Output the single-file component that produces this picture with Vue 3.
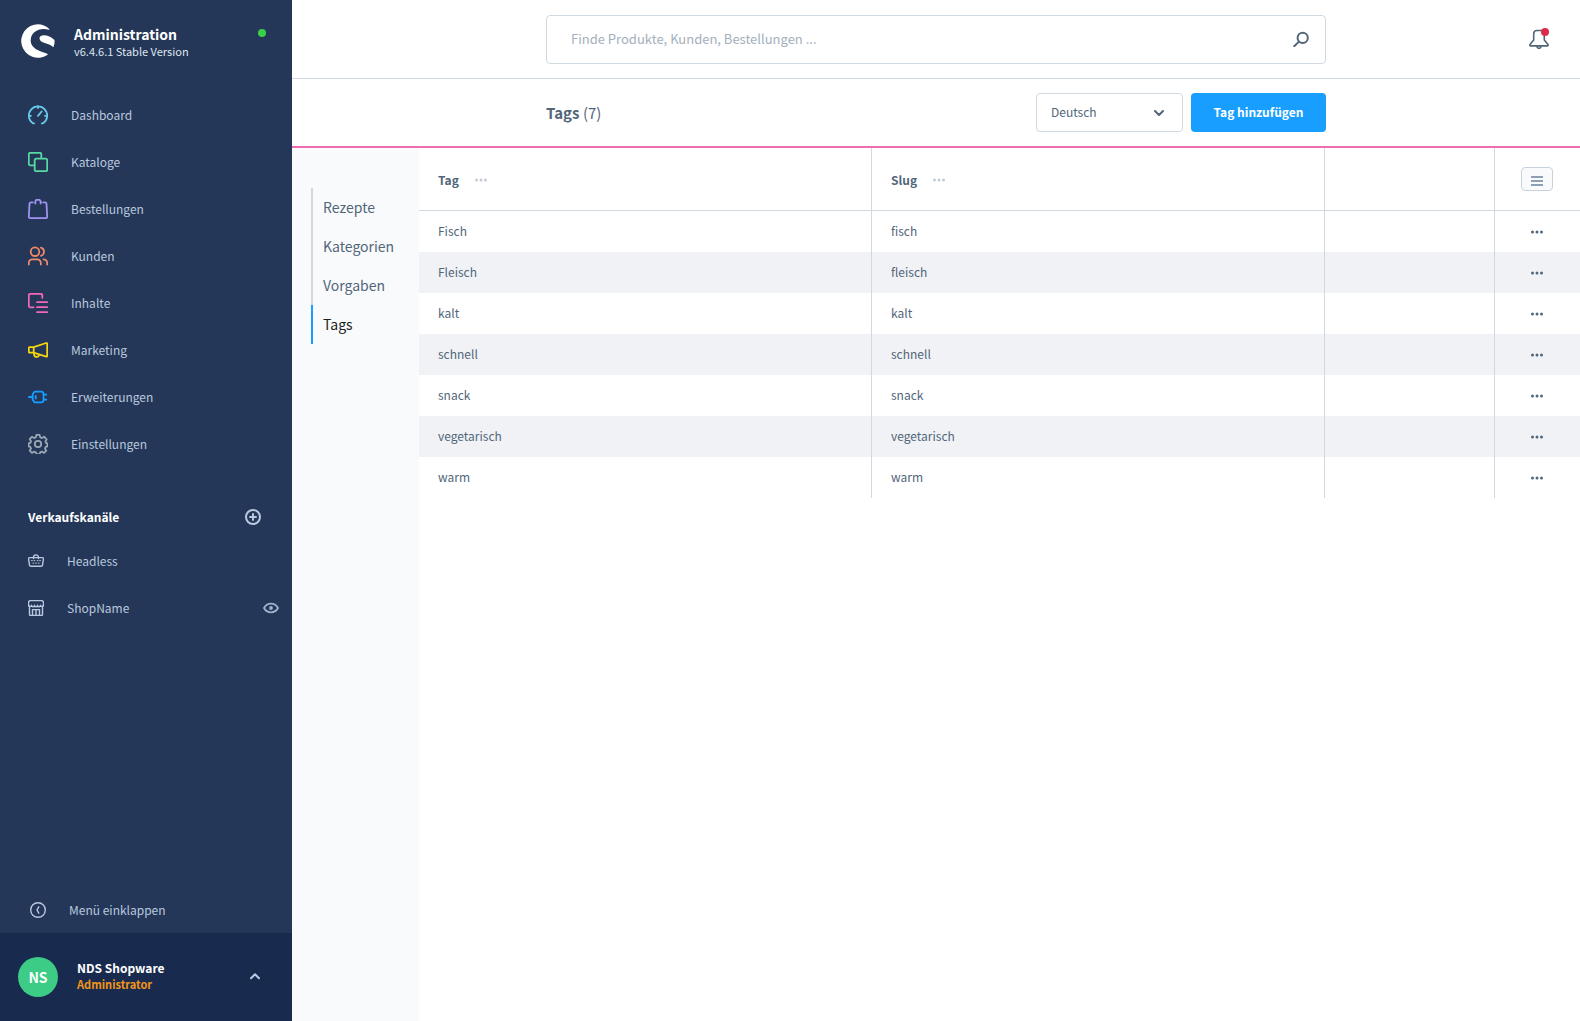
<script setup>
import { ref } from 'vue'

const navItems = [
  { label: 'Dashboard', icon: 'dashboard', color: '#69c8e8' },
  { label: 'Kataloge', icon: 'catalog', color: '#57d9a3' },
  { label: 'Bestellungen', icon: 'orders', color: '#a092f0' },
  { label: 'Kunden', icon: 'customers', color: '#f08a68' },
  { label: 'Inhalte', icon: 'content', color: '#f068b8' },
  { label: 'Marketing', icon: 'marketing', color: '#f5d60f' },
  { label: 'Erweiterungen', icon: 'extensions', color: '#189eff' },
  { label: 'Einstellungen', icon: 'settings', color: '#9aa8b5' },
]

const channels = [
  { label: 'Headless', icon: 'basket', visible: false },
  { label: 'ShopName', icon: 'store', visible: true },
]

const tabs = ['Rezepte', 'Kategorien', 'Vorgaben', 'Tags']
const activeTab = ref('Tags')

const tags = ['Fisch', 'Fleisch', 'kalt', 'schnell', 'snack', 'vegetarisch', 'warm'].map((name) => ({
  name,
  slug: name.toLowerCase(),
}))

const language = ref('Deutsch')
const query = ref('')
</script>

<template>
  <div class="app">
    <aside class="sidebar">
      <header class="brand">
        <svg class="logo" viewBox="0 0 34 34" aria-hidden="true">
          <path
            fill="#fff"
            d="M28 4.800C25 1.800 21 0.200 17 0.200A16.800 16.800 0 1 0 26.300 31c.6-.4.500-1-.2-1.300C21 27.500 9.700 25.500 9.700 16.500 9.700 9 16 5.200 22.500 5c2 0 3.800.3 5.300.8.700.2.800-.4.200-1z"
          />
          <path
            fill="#fff"
            d="M33.500 16c-2.700-2.800-6-4.500-9.800-4.800-3-.2-5.200 1-5.200 3.100 0 5.300 9.700 4.800 13.200 8.500.4.400.8.300 1-.2.700-2 1-4.200.8-6.600z"
          />
        </svg>
        <div class="brand-text">
          <strong>Administration</strong>
          <span>v6.4.6.1 Stable Version</span>
        </div>
        <span class="status"></span>
      </header>

      <nav class="main-nav">
        <a v-for="item in navItems" :key="item.label" href="#" class="nav-item">
          <svg class="nav-icon" viewBox="0 0 20 20" :style="{ color: item.color }" aria-hidden="true">
            <template v-if="item.icon === 'dashboard'">
              <path d="M6.200 18.300H4.900A9.200 9.200 0 1 1 15.100 18.300H13.800M10 1v2M1 10.800h2M17 10.800h2M10 10.800l3.600-4.300" />
            </template>
            <template v-else-if="item.icon === 'catalog'">
              <path d="M5.700 13.300H2.300A1.500 1.500 0 0 1 .8 11.800V2.300A1.500 1.500 0 0 1 2.300.8h9.500a1.500 1.500 0 0 1 1.500 1.500v3.400" />
              <rect x="6.700" y="6.700" width="12.500" height="12.500" rx="1.500" />
            </template>
            <template v-else-if="item.icon === 'orders'">
              <path d="M4.800 3.400H3A1.500 1.500 0 0 0 1.500 4.900L.8 17.600a1.500 1.500 0 0 0 1.500 1.600h15.400a1.500 1.500 0 0 0 1.500-1.600L18.500 4.900A1.500 1.500 0 0 0 17 3.400h-1.800M7.400 4.600V2.600A1.800 1.800 0 0 1 9.200.8h1.600a1.800 1.800 0 0 1 1.800 1.800v2M7.400 3.400H7M12.600 3.400h.5" />
            </template>
            <template v-else-if="item.icon === 'customers'">
              <circle cx="7" cy="5.700" r="4.300" />
              <path d="M.8 18.500v-1.700a3.500 3.500 0 0 1 3.500-3.500h5a3.500 3.500 0 0 1 3.500 3.500v1.700M13 1.600a4.300 4.300 0 0 1 0 8.200M15.500 13.400a3.700 3.700 0 0 1 3.700 3.600v1.500" />
            </template>
            <template v-else-if="item.icon === 'content'">
              <path d="M5.700 14.300H2.300A1.500 1.500 0 0 1 .8 12.800V2.300A1.500 1.500 0 0 1 2.300.8h10.500a1.500 1.500 0 0 1 1.500 1.500v2.500M9 9.200h10.300M9 14.200h10.300M9 19.200h10.300" />
            </template>
            <template v-else-if="item.icon === 'marketing'">
              <path d="M1.700 7.200h4L18.200 3a.8.8 0 0 1 1 .7v12.200a.8.8 0 0 1-1 .7L5.700 12.700h-4a.9.9 0 0 1-.9-.9V8.100a.9.9 0 0 1 .9-.9zM5.700 7.200v5.500M6 13.200v1.200a2.600 2.600 0 0 0 4.800 1.300" />
            </template>
            <template v-else-if="item.icon === 'extensions'">
              <path d="M.9 10h3.800M15.500 7.600h2.800M15.500 12.700h2.800M6.700 4.700h6.600a2 2 0 0 1 2.200 2v6.600a2 2 0 0 1-2.200 2H6.700L4.700 13V7zM7.700 9v2.400" />
            </template>
            <template v-else>
              <circle cx="10" cy="10" r="3.200" />
              <path d="M8.400.9h3.200l.6 2.400 1.700.7L16 2.700 17.400 4l1.300 1.500-1.300 2 .6 1.400 1.300.4v3l-1.600.5-.7 1.700 1.300 2.200-2.200 2.200-2.200-1.300-1.700.7-.6 1.900H8.400l-.6-1.900-1.700-.7-2.200 1.300-2.200-2.200L3 14.500l-.7-1.700-1.600-.5v-3L2.300 8.800 3 7.300 1.700 5.100 3.900 2.800 6.100 4l1.700-.7z" />
            </template>
          </svg>
          <span>{{ item.label }}</span>
        </a>
      </nav>

      <section class="channels">
        <div class="channels-head">
          <h2>Verkaufskanäle</h2>
          <button type="button" class="plain" aria-label="Verkaufskanal hinzufügen">
            <svg width="16" height="16" viewBox="0 0 16 16" aria-hidden="true">
              <circle cx="8" cy="8" r="7" />
              <path d="M8 5v6M5 8h6" />
            </svg>
          </button>
        </div>
        <a v-for="channel in channels" :key="channel.label" href="#" class="channel">
          <svg v-if="channel.icon === 'basket'" class="channel-icon" viewBox="0 0 16 16" aria-hidden="true">
            <path d="M5 4.600H1.500a1 1 0 0 0-1 1.200l1 6.300a1.400 1.400 0 0 0 1.400 1.200h10.200a1.400 1.400 0 0 0 1.400-1.200l1-6.300a1 1 0 0 0-1-1.200H11M5.500 5.600V4.400a2.500 2.500 0 0 1 5 0v1.200M5.500 4.600h5" />
            <path class="dots" d="M3.500 7.600h.8M6 7.600h.8M9.200 7.600h.8M11.700 7.600h.8M5 10.100h.8M7.600 10.100h.8M10.300 10.100h.8" />
          </svg>
          <svg v-else class="channel-icon" viewBox="0 0 16 16" aria-hidden="true">
            <path d="M1.500 6v8.600a.8.800 0 0 0 .8.800h11.400a.8.800 0 0 0 .8-.8V6M2.500.600h11a2 2 0 0 1 2 2V5a1.500 1.500 0 0 1-3 .2 1.500 1.500 0 0 1-3 0 1.500 1.500 0 0 1-3 0 1.500 1.500 0 0 1-3 0A1.500 1.500 0 0 1 .5 5V2.600a2 2 0 0 1 2-2zM4.500 15.400V9.600h7v5.800M8 9.600v5.800" />
          </svg>
          <span>{{ channel.label }}</span>
          <svg v-if="channel.visible" class="eye" viewBox="0 0 16 16" aria-hidden="true">
            <path d="M1 8c1.600-3 4.200-4.300 7-4.300S13.400 5 15 8c-1.600 3-4.200 4.300-7 4.300S2.600 11 1 8z" />
            <circle cx="8" cy="8" r="1" fill="currentColor" />
          </svg>
        </a>
      </section>

      <button type="button" class="collapse">
        <svg width="16" height="16" viewBox="0 0 16 16" aria-hidden="true">
          <circle cx="8" cy="8" r="7.300" />
          <path d="M8.800 4.800 7 8l1.800 3.200" />
        </svg>
        <span>Menü einklappen</span>
      </button>

      <button type="button" class="user">
        <span class="avatar">NS</span>
        <span class="user-text">
          <strong>NDS Shopware</strong>
          <span class="role">Administrator</span>
        </span>
        <svg class="user-chevron" width="12" height="12" viewBox="0 0 12 12" aria-hidden="true">
          <path d="M2 7.300 6 3.300l4 4" />
        </svg>
      </button>
    </aside>

    <main class="page">
      <div class="topbar">
        <label class="search">
          <input v-model="query" type="text" placeholder="Finde Produkte, Kunden, Bestellungen ..." aria-label="Suche" />
          <svg width="16" height="16" viewBox="0 0 16 16" aria-hidden="true">
            <circle cx="9.700" cy="6.900" r="5.100" />
            <path d="M6 10.600 1.200 15.200" />
          </svg>
        </label>
        <button type="button" class="bell" aria-label="Benachrichtigungen">
          <svg width="20" height="20" viewBox="0 0 20 20" aria-hidden="true">
            <path d="M8 1.500h4a3.300 3.300 0 0 1 3.300 3.200v6.200l3.500 4.400a.9.900 0 0 1-.7 1.600H1.900a.9.900 0 0 1-.7-1.600l3.500-4.400V4.700A3.300 3.300 0 0 1 8 1.500zM8 17.300a2 2 0 0 0 4 0" />
          </svg>
          <span class="bell-dot"></span>
        </button>
      </div>

      <div class="smartbar">
        <div class="smartbar-inner">
          <h1>Tags <span>(7)</span></h1>
          <div class="language">
            <select v-model="language" aria-label="Sprache">
              <option>Deutsch</option>
              <option>English</option>
            </select>
            <svg width="12" height="12" viewBox="0 0 12 12" aria-hidden="true">
              <path d="M2 4l4 4 4-4" />
            </svg>
          </div>
          <button type="button" class="primary">Tag hinzufügen</button>
        </div>
      </div>

      <div class="content">
        <nav class="side-tabs">
          <a
            v-for="tab in tabs"
            :key="tab"
            href="#"
            :class="{ active: tab === activeTab }"
            @click.prevent="activeTab = tab"
          >{{ tab }}</a>
        </nav>

        <div class="grid-wrap">
          <table>
            <colgroup>
              <col />
              <col />
              <col class="col-extra" />
              <col class="col-actions" />
            </colgroup>
            <thead>
              <tr>
                <th v-for="title in ['Tag', 'Slug']" :key="title" scope="col">
                  <div class="head-cell">
                    <span>{{ title }}</span>
                    <svg class="more light" width="12" height="4" viewBox="0 0 12 4" aria-hidden="true">
                      <circle cx="1.500" cy="2" r="1.500" /><circle cx="6" cy="2" r="1.500" /><circle cx="10.500" cy="2" r="1.500" />
                    </svg>
                  </div>
                </th>
                <th></th>
                <th class="actions">
                  <button type="button" class="settings" aria-label="Spalten">
                    <svg width="12" height="12" viewBox="0 0 12 12" aria-hidden="true">
                      <path d="M0 2h12M0 6h12M0 10h12" />
                    </svg>
                  </button>
                </th>
              </tr>
            </thead>
            <tbody>
              <tr v-for="tag in tags" :key="tag.name">
                <td>{{ tag.name }}</td>
                <td>{{ tag.slug }}</td>
                <td></td>
                <td class="actions">
                  <button type="button" class="row-menu" :aria-label="'Aktionen für ' + tag.name">
                    <svg class="more" width="12" height="4" viewBox="0 0 12 4" aria-hidden="true">
                      <circle cx="1.500" cy="2" r="1.500" /><circle cx="6" cy="2" r="1.500" /><circle cx="10.500" cy="2" r="1.500" />
                    </svg>
                  </button>
                </td>
              </tr>
            </tbody>
          </table>
        </div>
      </div>
    </main>
  </div>
</template>

<style>
body {
  margin: 0;
}
</style>

<style scoped>
.app {
  display: flex;
  min-height: 100vh;
  font-family: 'Source Sans Pro', 'Noto Sans CJK SC', 'Noto Sans', sans-serif;
  font-size: 12px;
  line-height: 16px;
  color: #52667a;
  background: #fff;
}

.app *,
.app *::before {
  box-sizing: border-box;
}

a {
  color: inherit;
  text-decoration: none;
}

button,
input,
select {
  margin: 0;
  padding: 0;
  border: 0;
  background: none;
  font: inherit;
  color: inherit;
}

button {
  cursor: pointer;
}

svg {
  display: block;
  flex: none;
  fill: none;
  stroke: currentColor;
  stroke-width: 2;
  stroke-linecap: round;
  stroke-linejoin: round;
}

/* Sidebar */
.sidebar {
  display: flex;
  flex-direction: column;
  flex: none;
  width: 292px;
  background: #243758;
  color: #b9c8df;
}

.brand {
  display: flex;
  align-items: flex-start;
  height: 91px;
  padding: 24px 26px 0 21px;
}

.logo {
  width: 34px;
  height: 34px;
  stroke: none;
}

.brand-text {
  display: flex;
  flex: 1;
  flex-direction: column;
  margin: 1px 0 0 19px;
  font-size: 11px;
  color: #dfe6f0;
}

.brand-text strong {
  font-size: 14px;
  line-height: 18px;
  color: #fff;
}

.status {
  width: 8px;
  height: 8px;
  margin-top: 5px;
  border-radius: 50%;
  background: #37d046;
}

.nav-item {
  display: flex;
  align-items: center;
  gap: 23px;
  height: 47px;
  padding-left: 28px;
}

.nav-icon {
  width: 20px;
  height: 20px;
  stroke-width: 1.8;
}

.channels {
  margin-top: 30px;
}

.channels-head {
  display: flex;
  align-items: center;
  justify-content: space-between;
  height: 40px;
  padding: 0 31px 0 28px;
}

.channels-head h2 {
  margin: 0;
  font-size: 12px;
  color: #fff;
}

.channels-head svg {
  stroke-width: 2;
}

.channel {
  display: flex;
  align-items: center;
  gap: 23px;
  height: 47px;
  padding: 0 13px 0 28px;
}

.channel-icon {
  width: 16px;
  height: 16px;
  stroke-width: 1.4;
}

.dots {
  stroke-width: 1;
}

.channel span {
  flex: 1;
}

.eye {
  width: 16px;
  height: 16px;
  color: #9fb2cc;
  stroke-width: 1.8;
}

.collapse {
  display: flex;
  align-items: center;
  gap: 23px;
  height: 47px;
  margin-top: auto;
  padding-left: 30px;
}

.collapse svg {
  stroke-width: 1.4;
}

.user {
  display: flex;
  align-items: center;
  height: 88px;
  padding: 0 31px 0 18px;
  background: #182b4e;
  text-align: left;
}

.avatar {
  width: 40px;
  height: 40px;
  border-radius: 50%;
  background: #3ccc85;
  color: #fff;
  font-size: 14px;
  font-weight: 700;
  line-height: 40px;
  text-align: center;
}

.user-text {
  display: flex;
  flex: 1;
  flex-direction: column;
  margin-left: 19px;
  padding-bottom: 2px;
  line-height: 17px;
  color: #fff;
}

.role {
  color: #f39519;
  font-size: 11px;
  font-weight: 700;
}

/* Page */
.page {
  display: flex;
  flex: 1;
  flex-direction: column;
  min-width: 0;
}

.topbar,
.smartbar {
  display: grid;
  grid-template-columns: 1fr minmax(0, 780px) 1fr;
  align-items: center;
}

.topbar {
  height: 79px;
  border-bottom: 1px solid #d1d9e6;
}

.search {
  display: flex;
  grid-column: 2;
  align-items: center;
  height: 49px;
  padding: 0 16px 0 24px;
  border: 1px solid #d1d9e0;
  border-radius: 4px;
}

.search input {
  flex: 1;
  min-width: 0;
  outline: 0;
  font-size: 13px;
  line-height: 24px;
}

.search input::placeholder {
  color: #a3b0bd;
  opacity: 1;
}

.bell {
  position: relative;
  justify-self: end;
  margin-right: 31px;
}

.bell svg {
  stroke-width: 1.6;
}

.bell-dot {
  position: absolute;
  top: -1px;
  right: 0;
  width: 8px;
  height: 8px;
  border-radius: 50%;
  background: #de294c;
}

.smartbar {
  height: 69px;
  border-bottom: 2px solid #ef6db0;
}

.smartbar-inner {
  display: flex;
  grid-column: 2;
  gap: 8px;
  align-items: center;
}

h1 {
  flex: 1;
  margin: 0;
  font-size: 15px;
  font-weight: 700;
  line-height: 24px;
}

h1 span {
  font-weight: 400;
}

.language {
  position: relative;
  width: 147px;
}

.language select {
  width: 100%;
  height: 39px;
  padding: 0 40px 2px 14px;
  border: 1px solid #d1d9e0;
  border-radius: 4px;
  appearance: none;
}

.language svg {
  position: absolute;
  top: 14px;
  right: 18px;
  pointer-events: none;
}

.primary {
  width: 135px;
  height: 39px;
  padding-bottom: 2px;
  border-radius: 4px;
  background: #189eff;
  color: #fff;
  font-weight: 700;
}

.content {
  display: flex;
  flex: 1;
}

.side-tabs {
  display: flex;
  flex: none;
  flex-direction: column;
  width: 127px;
  padding: 40px 0 0 19px;
  background: #f9fafb;
  font-size: 14px;
}

.side-tabs a {
  padding-left: 10px;
  border-left: 2px solid #d1d9e0;
  line-height: 39px;
}

.side-tabs a.active {
  border-color: #189eff;
  color: #1c1f23;
}

.grid-wrap {
  flex: 1;
  min-width: 0;
}

/* Tag list */
table {
  width: 100%;
  table-layout: fixed;
  border-collapse: separate;
  border-spacing: 0;
}

.col-extra {
  width: 170px;
}

.col-actions {
  width: 85px;
}

th,
td {
  padding: 0 19px;
  border-right: 1px solid #d1d9e0;
  text-align: left;
}

th {
  height: 63px;
  padding-top: 2px;
  border-bottom: 1px solid #d1d9e0;
}

td {
  height: 41px;
  padding-bottom: 2px;
}

tbody tr:nth-child(even) {
  background: #f0f2f5;
}

.head-cell {
  display: flex;
  align-items: center;
  gap: 16px;
}

.more {
  fill: #52667a;
  stroke: none;
}

.more.light {
  fill: #c3ccd5;
}

th.actions,
td.actions {
  padding: 0 2px 0 0;
  border-right: 0;
}

.settings,
.row-menu {
  display: flex;
  align-items: center;
  justify-content: center;
  width: 32px;
  height: 24px;
  margin: 0 auto;
}

.settings {
  padding-top: 4px;
  border: 1px solid #c9d2dc;
  border-radius: 4px;
  background: #f9fafb;
  color: #8f9fb3;
}

.settings svg {
  stroke-width: 2;
  stroke-linecap: butt;
}
</style>
